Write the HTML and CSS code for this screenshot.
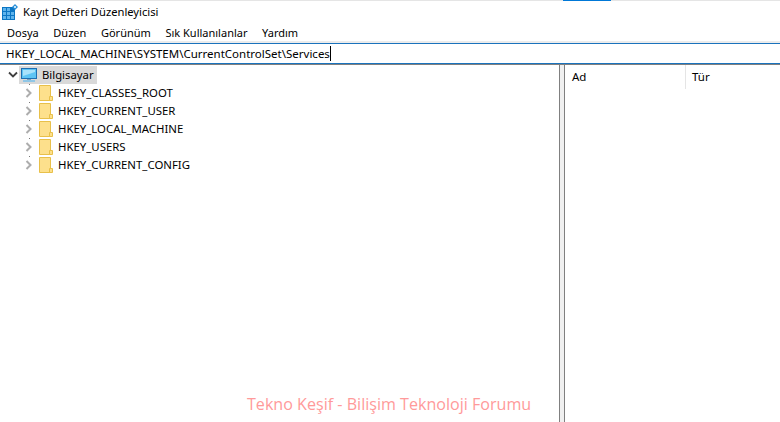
FILE: index.html
```html
<!DOCTYPE html>
<html lang="tr">
<head>
<meta charset="utf-8">
<title>Kayıt Defteri Düzenleyicisi</title>
<link rel="stylesheet" href="styles.css">
</head>
<body>
<div class="window">
  <div class="topline"><span class="topline-fill"></span></div>
  <header class="titlebar">
    <svg class="app-icon" width="16" height="16" viewBox="0 0 16 16">
      <rect x="0" y="3" width="13" height="13" fill="#0b76c4"/>
      <g fill="#5fb4ec"><rect x="1" y="4" width="3" height="3"/><rect x="5" y="4" width="3" height="3"/><rect x="1" y="8" width="3" height="3"/><rect x="5" y="8" width="3" height="3"/><rect x="9" y="8" width="3" height="3"/><rect x="1" y="12" width="3" height="3"/><rect x="5" y="12" width="3" height="3"/><rect x="9" y="12" width="3" height="3"/></g>
      <path d="M13 0l3 3-3 3-3-3z" fill="#2a8fd8"/><rect x="12" y="2" width="2" height="2" fill="#bfe3fa"/>
    </svg>
    <span>Kayıt Defteri Düzenleyicisi</span>
  </header>
  <nav class="menu"><span>Dosya</span><span>Düzen</span><span>Görünüm</span><span>Sık Kullanılanlar</span><span>Yardım</span></nav>
  <div class="address"><span>HKEY_LOCAL_MACHINE\SYSTEM\CurrentControlSet\Services</span><i class="caret"></i></div>
  <main class="panes">
    <section class="tree">
      <div class="root">
        <svg class="chev" width="12" height="12" viewBox="0 0 12 12"><path d="M2 3.5L6 7.5l4-4" fill="none" stroke="#404040" stroke-width="1.8"/></svg>
        <span class="root-sel">
          <svg width="18" height="16" viewBox="0 0 18 16"><rect x="1.5" y="1.5" width="15" height="10" fill="#5ec4f4" stroke="#1f6fb2"/><path d="M3 3h12v2L3 9z" fill="#a9e2fb"/><rect x="7" y="12" width="4" height="1" fill="#7d9fb8"/><rect x="3" y="13" width="12" height="2" fill="#8fc6e6"/></svg>
          <span>Bilgisayar</span>
        </span>
      </div>
      <div class="key"><svg class="chev" width="12" height="12" viewBox="0 0 12 12"><path d="M3.5 2L7.5 6l-4 4" fill="none" stroke="#adadad" stroke-width="2"/></svg><svg class="folder" width="14" height="16" viewBox="0 0 14 16"><path d="M.5.5h11v15H.5z" fill="#fde08c" stroke="#e8c04a"/><path d="M10.5 11.5h3v4h-3z" fill="#fde08c" stroke="#e8c04a"/></svg><span>HKEY_CLASSES_ROOT</span></div>
      <div class="key"><svg class="chev" width="12" height="12" viewBox="0 0 12 12"><path d="M3.5 2L7.5 6l-4 4" fill="none" stroke="#adadad" stroke-width="2"/></svg><svg class="folder" width="14" height="16" viewBox="0 0 14 16"><path d="M.5.5h11v15H.5z" fill="#fde08c" stroke="#e8c04a"/><path d="M10.5 11.5h3v4h-3z" fill="#fde08c" stroke="#e8c04a"/></svg><span>HKEY_CURRENT_USER</span></div>
      <div class="key"><svg class="chev" width="12" height="12" viewBox="0 0 12 12"><path d="M3.5 2L7.5 6l-4 4" fill="none" stroke="#adadad" stroke-width="2"/></svg><svg class="folder" width="14" height="16" viewBox="0 0 14 16"><path d="M.5.5h11v15H.5z" fill="#fde08c" stroke="#e8c04a"/><path d="M10.5 11.5h3v4h-3z" fill="#fde08c" stroke="#e8c04a"/></svg><span>HKEY_LOCAL_MACHINE</span></div>
      <div class="key"><svg class="chev" width="12" height="12" viewBox="0 0 12 12"><path d="M3.5 2L7.5 6l-4 4" fill="none" stroke="#adadad" stroke-width="2"/></svg><svg class="folder" width="14" height="16" viewBox="0 0 14 16"><path d="M.5.5h11v15H.5z" fill="#fde08c" stroke="#e8c04a"/><path d="M10.5 11.5h3v4h-3z" fill="#fde08c" stroke="#e8c04a"/></svg><span>HKEY_USERS</span></div>
      <div class="key"><svg class="chev" width="12" height="12" viewBox="0 0 12 12"><path d="M3.5 2L7.5 6l-4 4" fill="none" stroke="#adadad" stroke-width="2"/></svg><svg class="folder" width="14" height="16" viewBox="0 0 14 16"><path d="M.5.5h11v15H.5z" fill="#fde08c" stroke="#e8c04a"/><path d="M10.5 11.5h3v4h-3z" fill="#fde08c" stroke="#e8c04a"/></svg><span>HKEY_CURRENT_CONFIG</span></div>
    </section>
    <div class="splitter"></div>
    <section class="list">
      <div class="list-head"><span class="col-ad">Ad</span><span class="col-tur">Tür</span></div>
    </section>
  </main>
  <div class="watermark">Tekno Keşif - Bilişim Teknoloji Forumu</div>
</div>
</body>
</html>
```
FILE: styles.css
```css
* { box-sizing: border-box; }
html, body { margin: 0; height: 100%; overflow: hidden; background: #fff; }
body { font: 12px/16px "Noto Sans", "Open Sans", sans-serif; color: #000; }
.window { position: relative; height: 422px; display: flex; flex-direction: column; }
.topline { height: 1px; background: #e5e5e5; padding-left: 563px; flex: none; }
.topline-fill { display: block; width: 48px; height: 1px; background: #0078d7; }
.titlebar { height: 23px; display: flex; align-items: center; gap: 5px; padding: 0 0 2px 2px; flex: none; font-size: 11.2px; }
.menu { height: 18px; display: flex; gap: 14.6px; padding-left: 7px; align-items: center; flex: none; font-size: 11px; }
.address { height: 21px; margin-top: 1px; border-top: 1px solid #1a73bd; border-bottom: 1px solid #1a73bd; box-shadow: 0 -2px 0 #ececec; display: flex; align-items: center; padding-left: 6px; flex: none; font-size: 11.5px; }
.caret { display: block; width: 1px; height: 15px; background: #000; }
.panes { flex: 1; display: flex; border-top: 1px solid #808080; min-height: 0; }
.tree { width: 559px; padding-top: 1px; flex: none; }
.root { height: 18px; display: flex; align-items: center; padding-left: 7px; }
.root-sel { display: flex; align-items: center; gap: 4px; height: 18px; background: #d9d9d9; padding: 0 3px 0 1px; }
.root-sel span { font-size: 11.3px; }
.key { height: 18px; display: flex; align-items: center; padding-left: 23px; background: linear-gradient(#777, #777) 29px 0 / 1px 1px no-repeat; }
.key .folder { margin-left: 4px; margin-right: 5px; }
.key span { font-size: 11.4px; }
.chev { flex: none; }
.splitter { width: 6px; flex: none; background: #f0f0f0; border-left: 1px solid #808080; border-right: 1px solid #808080; }
.list { flex: 1; }
.list-head { height: 24px; display: flex; align-items: center; padding-left: 7px; font-size: 11.5px; }
.col-ad { width: 113px; }
.col-tur { border-left: 1px solid #e5e5e5; padding-left: 6px; height: 24px; line-height: 24px; }
.watermark { position: absolute; left: 247px; top: 393px; font: 16.1px/22px "Open Sans", sans-serif; color: #ff9a9a; }
```
